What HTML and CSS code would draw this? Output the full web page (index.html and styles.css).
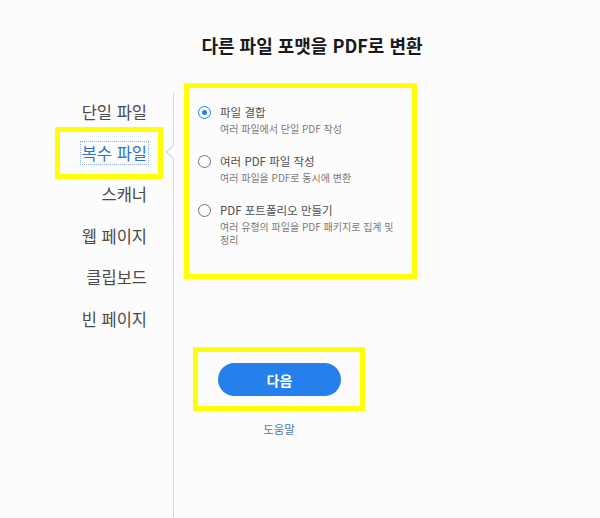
FILE: index.html
```html
<!DOCTYPE html>
<html lang="ko">
<head>
<meta charset="utf-8">
<title>다른 파일 포맷을 PDF로 변환</title>
<link rel="stylesheet" href="styles.css">
</head>
<body>
  <h1 class="title">다른 파일 포맷을 PDF로 변환</h1>
  <div class="main">
    <nav class="nav">
      <div class="nav-item"><span class="nav-text">단일 파일</span></div>
      <div class="nav-item nav-item--active"><span class="nav-text">복수 파일</span></div>
      <div class="nav-item"><span class="nav-text">스캐너</span></div>
      <div class="nav-item"><span class="nav-text">웹 페이지</span></div>
      <div class="nav-item"><span class="nav-text">클립보드</span></div>
      <div class="nav-item"><span class="nav-text">빈 페이지</span></div>
    </nav>
    <div class="divider"><span class="notch"></span></div>
    <section class="content">
      <div class="options">
        <div class="option">
          <span class="radio radio--on"></span>
          <div class="option-body">
            <div class="option-label">파일 결합</div>
            <div class="option-sub">여러 파일에서 단일 PDF 작성</div>
          </div>
        </div>
        <div class="option">
          <span class="radio"></span>
          <div class="option-body">
            <div class="option-label">여러 PDF 파일 작성</div>
            <div class="option-sub">여러 파일을 PDF로 동시에 변환</div>
          </div>
        </div>
        <div class="option">
          <span class="radio"></span>
          <div class="option-body">
            <div class="option-label">PDF 포트폴리오 만들기</div>
            <div class="option-sub">여러 유형의 파일을 PDF 패키지로 집계 및 정리</div>
          </div>
        </div>
      </div>
      <div class="action">
        <div class="btn-box"><button class="btn">다음</button></div>
        <div class="help">도움말</div>
      </div>
    </section>
  </div>
</body>
</html>
```
FILE: styles.css
```css
html, body {
  margin: 0;
  padding: 0;
  background: #fcfcfc;
}
body {
  font-family: "Noto Sans CJK KR", "Noto Sans", sans-serif;
  width: 600px;
  height: 518px;
  overflow: hidden;
}
.title {
  margin: 0;
  padding: 33px 0 0 24px;
  height: 24px;
  line-height: 24px;
  font-size: 18px;
  font-weight: 700;
  color: #1a1a1a;
  text-align: center;
  margin-bottom: 26px;
}
.main {
  display: flex;
  height: 435px;
}
.nav {
  display: flex;
  flex-direction: column;
  margin-left: 60px;
  padding-top: 8px;
  width: 98px;
}
.nav-item {
  height: 41.4px;
  display: flex;
  align-items: center;
  justify-content: flex-end;
  padding-right: 10px;
  box-sizing: border-box;
  font-size: 16.5px;
  color: #4a4a4a;
}
.nav-text {
  display: inline-block;
  line-height: 22px;
  padding: 0 1px;
}
.nav-item--active {
  outline: 5px solid #ffff00;
}
.nav-item--active .nav-text {
  color: #2f74cc;
  outline: 1px dotted #8fb2df;
}
.divider {
  width: 1px;
  background: #dadada;
  margin-left: 15px;
  margin-top: 10px;
  position: relative;
}
.notch {
  position: absolute;
  top: 54px;
  left: -5px;
  width: 10px;
  height: 10px;
  box-sizing: border-box;
  background: #fcfcfc;
  border-left: 1px solid #d0d0d0;
  border-bottom: 1px solid #d0d0d0;
  transform: rotate(45deg);
}
.content {
  display: flex;
  flex-direction: column;
}
.options {
  margin-left: 10px;
  width: 233px;
  height: 196px;
  box-sizing: border-box;
  border: 5px solid #ffff00;
  padding: 14.5px 0 0 9px;
  display: flex;
  flex-direction: column;
  gap: 17px;
}
.option {
  display: flex;
  gap: 9px;
}
.radio {
  flex: none;
  width: 13px;
  height: 13px;
  margin-top: 3px;
  box-sizing: border-box;
  border: 1.6px solid #737373;
  border-radius: 50%;
  display: flex;
  align-items: center;
  justify-content: center;
}
.radio--on {
  border-color: #2680eb;
}
.radio--on::after {
  content: "";
  width: 5px;
  height: 5px;
  border-radius: 50%;
  background: #2680eb;
}
.option-body {
  width: 188px;
  word-break: keep-all;
}
.option-label {
  font-size: 11.5px;
  line-height: 19px;
  color: #4f4f4f;
}
.option-sub {
  font-size: 10px;
  line-height: 13px;
  color: #7a7a7a;
}
.action {
  margin-left: 19px;
  margin-top: 68px;
  width: 172px;
}
.btn-box {
  width: 172px;
  height: 64px;
  box-sizing: border-box;
  border: 5px solid #ffff00;
  padding: 11px 0 0 20px;
}
.btn {
  display: block;
  width: 123px;
  height: 33px;
  border: none;
  border-radius: 17px;
  background: #2680eb;
  color: #ffffff;
  font-family: "Noto Sans CJK KR", "Noto Sans", sans-serif;
  font-size: 14px;
  font-weight: 700;
  padding: 0;
}
.help {
  margin-top: 10px;
  line-height: 16px;
  font-size: 11.5px;
  color: #4f76b3;
  text-align: center;
}
```
